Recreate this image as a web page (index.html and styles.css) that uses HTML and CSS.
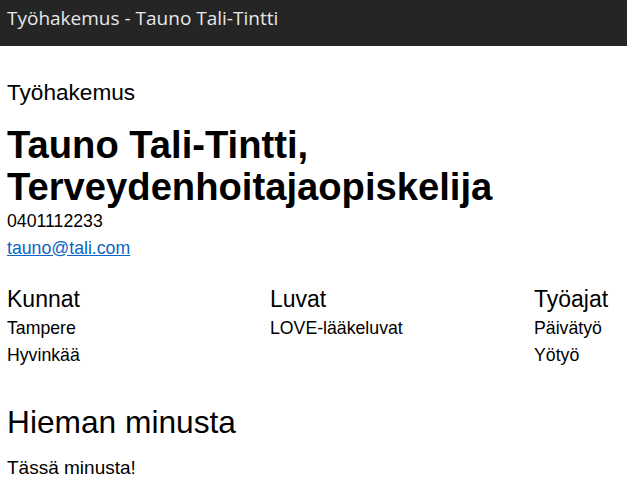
FILE: index.html
```html
<!DOCTYPE html>
<html lang="fi">
<head>
<meta charset="utf-8">
<title>Työhakemus - Tauno Tali-Tintti</title>
<link rel="stylesheet" href="styles.css">
</head>
<body>
<header class="titlebar">Työhakemus - Tauno Tali-Tintti</header>
<main class="page">
  <p class="kicker">Työhakemus</p>
  <h1 class="name">Tauno Tali-Tintti, Terveydenhoitajaopiskelija</h1>
  <div class="contact">
    <div>0401112233</div>
    <a href="#">tauno@tali.com</a>
  </div>
  <section class="columns">
    <div class="col">
      <h2 class="col-title">Kunnat</h2>
      <div class="item">Tampere</div>
      <div class="item">Hyvinkää</div>
    </div>
    <div class="col">
      <h2 class="col-title">Luvat</h2>
      <div class="item">LOVE-lääkeluvat</div>
    </div>
    <div class="col">
      <h2 class="col-title">Työajat</h2>
      <div class="item">Päivätyö</div>
      <div class="item">Yötyö</div>
    </div>
  </section>
  <h2 class="about-title">Hieman minusta</h2>
  <p class="about">Tässä minusta!</p>
</main>
</body>
</html>
```

FILE: styles.css
```css
* { box-sizing: border-box; }
html, body { margin: 0; padding: 0; background: #fff; }
body {
  font-family: "Liberation Sans", Arial, sans-serif;
  color: #000;
  font-size: 17.7px;
}
.titlebar {
  height: 46px;
  background: #252526;
  color: #e8e8e8;
  font-family: "Open Sans", "Noto Sans", sans-serif;
  font-size: 19px;
  line-height: 36px;
  padding: 0 7px;
}
.page { padding: 0 7px; }
.kicker {
  margin: 35px 0 0;
  font-size: 22.6px;
  line-height: 24px;
}
.name {
  margin: 19px 0 0;
  font-size: 38.2px;
  line-height: 42px;
  font-weight: bold;
}
.contact {
  line-height: 27px;
  margin-top: -0.5px;
}
.contact a { color: #0b66c3; }
.columns {
  display: grid;
  grid-template-columns: 263px 264px auto;
  margin-top: 23.5px;
}
.col-title {
  margin: 0 0 1.5px;
  font-size: 23px;
  line-height: 28px;
  font-weight: normal;
}
.item { line-height: 27px; }
.about-title {
  margin: 35.5px 0 0;
  font-size: 31.7px;
  line-height: 36px;
  font-weight: normal;
}
.about {
  margin: 13.5px 0 0;
  font-size: 19px;
  line-height: 27px;
}
```
